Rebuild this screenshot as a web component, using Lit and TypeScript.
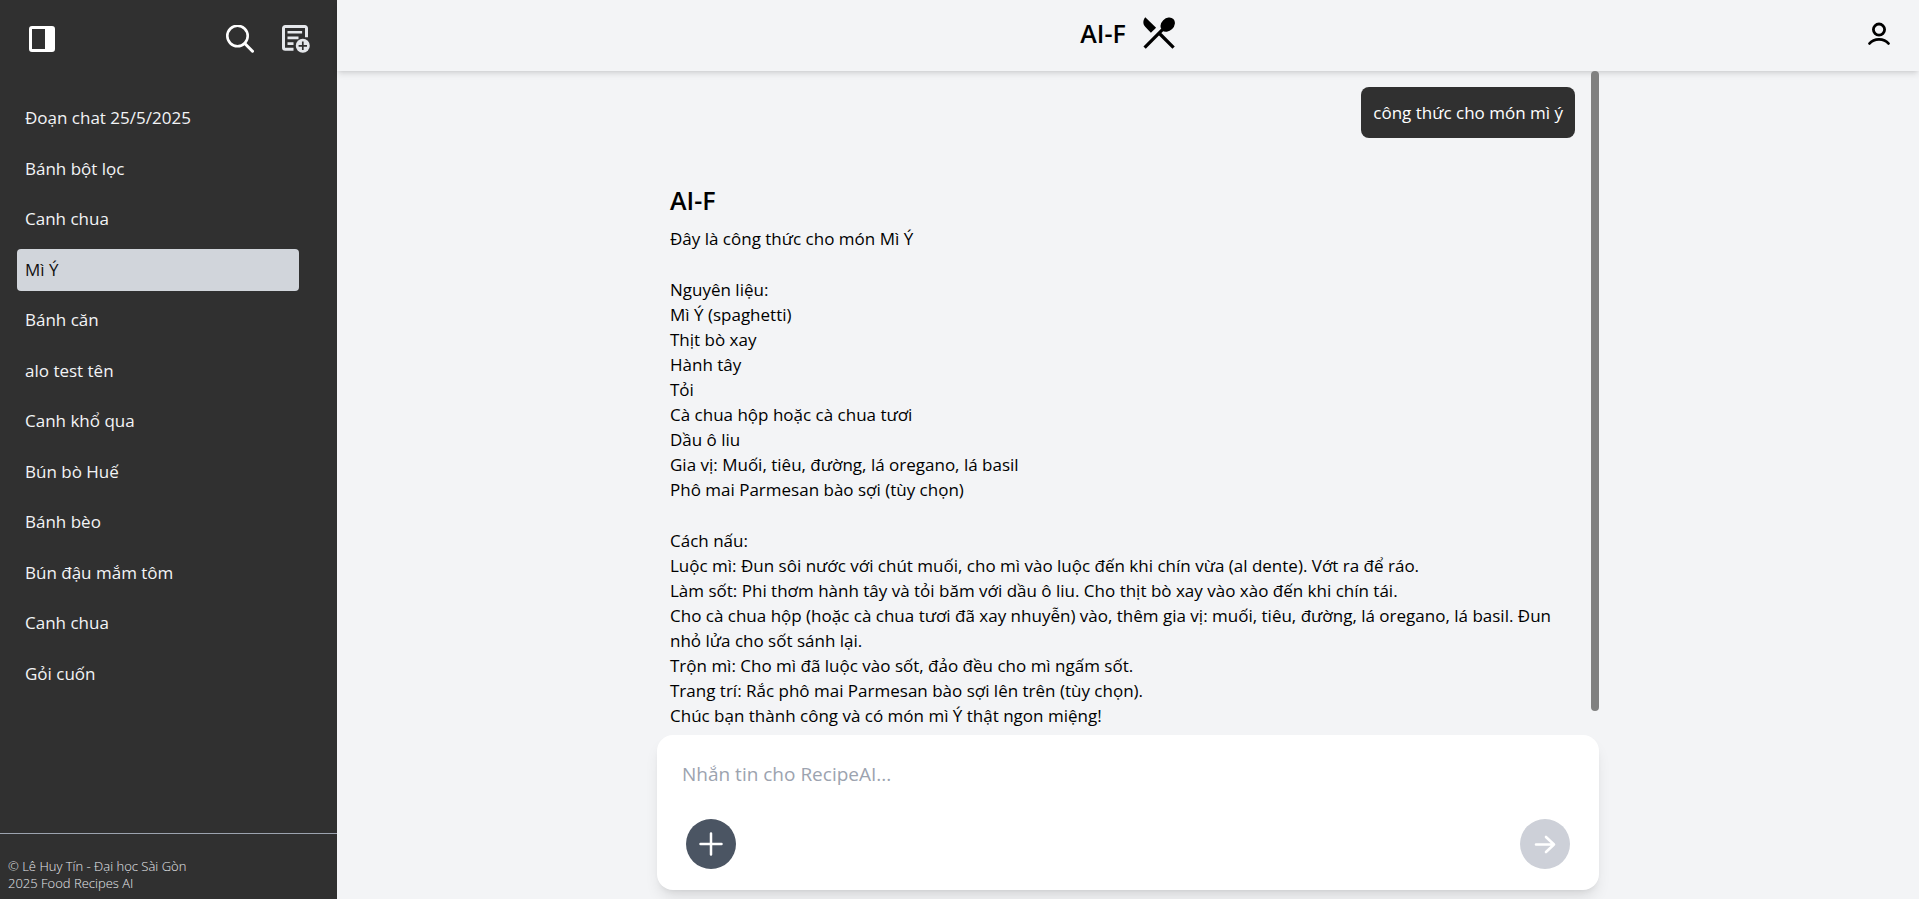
import { LitElement, html, css, svg } from "lit";
import { customElement, state, query } from "lit/decorators.js";
import { classMap } from "lit/directives/class-map.js";

const CHATS = [
  "Đoạn chat 25/5/2025",
  "Bánh bột lọc",
  "Canh chua",
  "Mì Ý",
  "Bánh căn",
  "alo test tên",
  "Canh khổ qua",
  "Bún bò Huế",
  "Bánh bèo",
  "Bún đậu mắm tôm",
  "Canh chua",
  "Gỏi cuốn",
];

const ANSWER = [
  ["Đây là công thức cho món Mì Ý"],
  [
    "Nguyên liệu:",
    "Mì Ý (spaghetti)",
    "Thịt bò xay",
    "Hành tây",
    "Tỏi",
    "Cà chua hộp hoặc cà chua tươi",
    "Dầu ô liu",
    "Gia vị: Muối, tiêu, đường, lá oregano, lá basil",
    "Phô mai Parmesan bào sợi (tùy chọn)",
  ],
  [
    "Cách nấu:",
    "Luộc mì: Đun sôi nước với chút muối, cho mì vào luộc đến khi chín vừa (al dente). Vớt ra để ráo.",
    "Làm sốt: Phi thơm hành tây và tỏi băm với dầu ô liu. Cho thịt bò xay vào xào đến khi chín tái.",
    "Cho cà chua hộp (hoặc cà chua tươi đã xay nhuyễn) vào, thêm gia vị: muối, tiêu, đường, lá oregano, lá basil. Đun nhỏ lửa cho sốt sánh lại.",
    "Trộn mì: Cho mì đã luộc vào sốt, đảo đều cho mì ngấm sốt.",
    "Trang trí: Rắc phô mai Parmesan bào sợi lên trên (tùy chọn).",
    "Chúc bạn thành công và có món mì Ý thật ngon miệng!",
  ],
];

const icon = (size: number, body: unknown) =>
  html`<svg width=${size} height=${size} viewBox="0 0 ${size} ${size}" fill="none" aria-hidden="true">${body}</svg>`;

const panelIcon = icon(26, svg`
  <rect x="1.5" y="1.5" width="23" height="23" rx="1.5" stroke="currentColor" stroke-width="3"/>
  <path d="M16 1h7a2 2 0 0 1 2 2v20a2 2 0 0 1-2 2h-7z" fill="currentColor"/>`);

const searchIcon = icon(28, svg`
  <circle cx="11.5" cy="11" r="10.2" stroke="currentColor" stroke-width="2.6"/>
  <path d="M18.800 18.500l7.700 7.700" stroke="currentColor" stroke-width="3" stroke-linecap="round"/>`);

const newChatIcon = icon(28, svg`
  <path d="M11.500 24.200H3.200a1.700 1.700 0 0 1-1.700-1.700V3.200a1.700 1.700 0 0 1 1.700-1.700h19.600a1.700 1.700 0 0 1 1.700 1.700v9" stroke="currentColor" stroke-width="3"/>
  <path d="M5.500 7.200h14.600M5.500 12.900h11M5.500 18.600h6" stroke="currentColor" stroke-width="2.600"/>
  <circle cx="20.800" cy="20.800" r="7" fill="currentColor"/>
  <path d="M20.800 16.600v8.400M16.600 20.800H25" stroke="#303030" stroke-width="1.700"/>`);

const cutleryIcon = icon(34, svg`
  <path d="M3.3 1.2C.6 4.400.8 8.300 3.200 10.800l5.700 5.900 5.200-4.900z" fill="currentColor"/>
  <path d="M2.600 31.600L20.500 13.700M17 17l14.600 14.600" stroke="currentColor" stroke-width="3.300"/>
  <ellipse cx="25.700" cy="8.600" rx="6.300" ry="8" transform="rotate(45 25.700 8.600)" fill="currentColor"/>`);

const userIcon = icon(24, svg`
  <circle cx="12" cy="7.600" r="5.600" stroke="currentColor" stroke-width="2.800"/>
  <path d="M2.500 21.500C4.800 18.600 8.200 17.300 12 17.300s7.200 1.300 9.500 4.200" stroke="currentColor" stroke-width="2.800" stroke-linecap="round"/>`);

const plusIcon = icon(24, svg`
  <path d="M12 1.500v21M1.500 12h21" stroke="currentColor" stroke-width="2.500" stroke-linecap="round"/>`);

const arrowIcon = icon(22, svg`
  <path d="M2 11.500h18M12 4l8 7.500-8 7.500" stroke="currentColor" stroke-width="2.600" stroke-linecap="round" stroke-linejoin="round"/>`);

@customElement("chat-sidebar")
export class ChatSidebar extends LitElement {
  @state() private selected = 3;

  static styles = css`
    :host {
      display: flex;
      flex-direction: column;
      width: 337px;
      flex: none;
      background: #303030;
      color: #f3f4f6;
    }
    button {
      border: 0;
      padding: 0;
      background: none;
      color: inherit;
      font: inherit;
      cursor: pointer;
    }
    svg {
      display: block;
    }
    .tools {
      display: flex;
      align-items: center;
      gap: 28px;
      padding: 25px 27px 0 29px;
    }
    .toggle {
      margin-right: auto;
      color: #fff;
    }
    .search {
      color: #fff;
    }
    .new {
      color: #e5e7eb;
    }
    nav {
      flex: 1;
      min-height: 0;
      padding: 44px 38px 0 17px;
    }
    ul {
      display: flex;
      flex-direction: column;
      justify-content: space-between;
      height: 100%;
      max-height: 598px;
      margin: 0;
      padding: 0;
      list-style: none;
    }
    .chat {
      display: block;
      width: 100%;
      padding: 8px;
      border-radius: 4px;
      font-weight: 500;
      font-size: 17px;
      line-height: 26px;
      text-align: left;
    }
    .chat.active {
      background: #d1d5db;
      color: #111;
      font-weight: 400;
    }
    footer {
      padding: 24px 8px 7px;
      border-top: 1px solid #9ca3af;
      color: #e5e7eb;
      font-weight: 300;
      font-size: 13px;
      line-height: 17px;
    }
    p {
      margin: 0;
    }
  `;

  render() {
    return html`
      <div class="tools">
        <button class="toggle" aria-label="Thu gọn">${panelIcon}</button>
        <button class="search" aria-label="Tìm kiếm">${searchIcon}</button>
        <button class="new" aria-label="Đoạn chat mới">${newChatIcon}</button>
      </div>
      <nav>
        <ul>
          ${CHATS.map(
            (name, i) => html`<li>
              <button
                class=${classMap({ chat: true, active: i === this.selected })}
                @click=${() => (this.selected = i)}
              >${name}</button>
            </li>`
          )}
        </ul>
      </nav>
      <footer>
        <p>© Lê Huy Tín - Đại học Sài Gòn</p>
        <p>2025 Food Recipes AI</p>
      </footer>
    `;
  }
}

@customElement("chat-thread")
export class ChatThread extends LitElement {
  @state() private thumb = 100;
  @state() private offset = 0;
  @query(".scroll") private scroller!: HTMLElement;
  private observer?: ResizeObserver;

  static styles = css`
    :host {
      display: flex;
      min-height: 0;
      flex: 1;
    }
    .scroll {
      flex: 1;
      min-width: 0;
      overflow-y: auto;
      scrollbar-width: none;
    }
    .messages {
      display: flex;
      flex-direction: column;
      padding: 16px 16px 32px 13px;
    }
    .question {
      align-self: flex-end;
      margin: 0;
      padding: 13px 12px;
      border-radius: 8px;
      background: #303030;
      color: #fff;
      line-height: 25px;
    }
    article {
      display: flex;
      flex-direction: column;
      gap: 26px;
      padding-top: 45px;
    }
    h2 {
      margin: 0 0 -17px;
      font-weight: 600;
      font-size: 25px;
      line-height: 34px;
    }
    p {
      margin: 0;
      line-height: 25px;
    }
    .track {
      width: 8px;
    }
    .thumb {
      border-radius: 4px;
      background: #808080;
    }
  `;

  firstUpdated() {
    this.observer = new ResizeObserver(() => this.measure());
    this.observer.observe(this.scroller);
    this.measure();
  }

  disconnectedCallback() {
    super.disconnectedCallback();
    this.observer?.disconnect();
  }

  private measure() {
    const { clientHeight, scrollHeight, scrollTop } = this.scroller;
    this.thumb = (clientHeight / scrollHeight) * 100;
    this.offset = (scrollTop / scrollHeight) * clientHeight;
  }

  render() {
    return html`
      <div class="scroll" @scroll=${this.measure}>
        <div class="messages">
          <p class="question">công thức cho món mì ý</p>
          <article>
            <h2>AI-F</h2>
            ${ANSWER.map(
              (part) => html`<section>${part.map((line) => html`<p>${line}</p>`)}</section>`
            )}
          </article>
        </div>
      </div>
      <div class="track">
        <div class="thumb" style="height:${this.thumb}%;transform:translateY(${this.offset}px)"></div>
      </div>
    `;
  }
}

@customElement("chat-composer")
export class ChatComposer extends LitElement {
  static styles = css`
    :host {
      display: block;
    }
    form {
      display: flex;
      flex-direction: column;
      gap: 20px;
      padding: 25px 29px 21px 25px;
      border-radius: 16px;
      background: #fff;
      box-shadow: 0 10px 15px -3px rgb(0 0 0 / 0.1), 0 4px 6px -4px rgb(0 0 0 / 0.1);
    }
    textarea {
      height: 39px;
      box-sizing: border-box;
      padding: 0;
      border: 0;
      outline: 0;
      resize: none;
      background: none;
      color: #000;
      font: inherit;
      font-size: 19px;
      line-height: 28px;
    }
    textarea::placeholder {
      color: #9ca3af;
    }
    .actions {
      display: flex;
      justify-content: space-between;
      padding-left: 4px;
    }
    button {
      display: grid;
      place-items: center;
      width: 50px;
      height: 50px;
      padding: 0;
      border: 0;
      border-radius: 50%;
      background: #4b5563;
      color: #fff;
      cursor: pointer;
    }
    .send {
      background: #cdd0d8;
    }
  `;

  render() {
    return html`
      <form @submit=${(e: Event) => e.preventDefault()}>
        <textarea rows="1" aria-label="Tin nhắn" placeholder="Nhắn tin cho RecipeAI..."></textarea>
        <div class="actions">
          <button type="button" aria-label="Thêm">${plusIcon}</button>
          <button class="send" aria-label="Gửi">${arrowIcon}</button>
        </div>
      </form>
    `;
  }
}

@customElement("app-root")
export class AppRoot extends LitElement {
  static styles = css`
    :host {
      display: flex;
      height: 100vh;
      background: #f3f4f6;
      color: #000;
      font-family: "Open Sans", "Noto Sans", sans-serif;
      font-size: 17px;
      line-height: 25px;
    }
    main {
      flex: 1;
      min-width: 0;
      display: flex;
      flex-direction: column;
    }
    header {
      display: grid;
      grid-template-columns: 1fr auto 1fr;
      align-items: center;
      height: 71px;
      padding: 0 28px;
      box-sizing: border-box;
      box-shadow: 0 4px 6px -1px rgb(0 0 0 / 0.1), 0 2px 4px -2px rgb(0 0 0 / 0.1);
    }
    .brand {
      grid-column: 2;
      display: flex;
      align-items: center;
      gap: 16px;
      padding-bottom: 5px;
    }
    h1 {
      margin: 0;
      font-weight: 600;
      font-size: 25px;
      line-height: 34px;
    }
    svg {
      display: block;
    }
    .account {
      justify-self: end;
      padding: 0 0 4px;
      border: 0;
      background: none;
      color: #000;
      cursor: pointer;
    }
    .column {
      flex: 1;
      min-height: 0;
      width: 100%;
      max-width: 942px;
      display: flex;
      flex-direction: column;
      box-sizing: border-box;
      margin: 0 auto;
      padding-bottom: 9px;
    }
  `;

  render() {
    return html`
      <chat-sidebar></chat-sidebar>
      <main>
        <header>
          <div class="brand">
            <h1>AI-F</h1>
            ${cutleryIcon}
          </div>
          <button class="account" aria-label="Tài khoản">${userIcon}</button>
        </header>
        <div class="column">
          <chat-thread></chat-thread>
          <chat-composer></chat-composer>
        </div>
      </main>
    `;
  }
}
